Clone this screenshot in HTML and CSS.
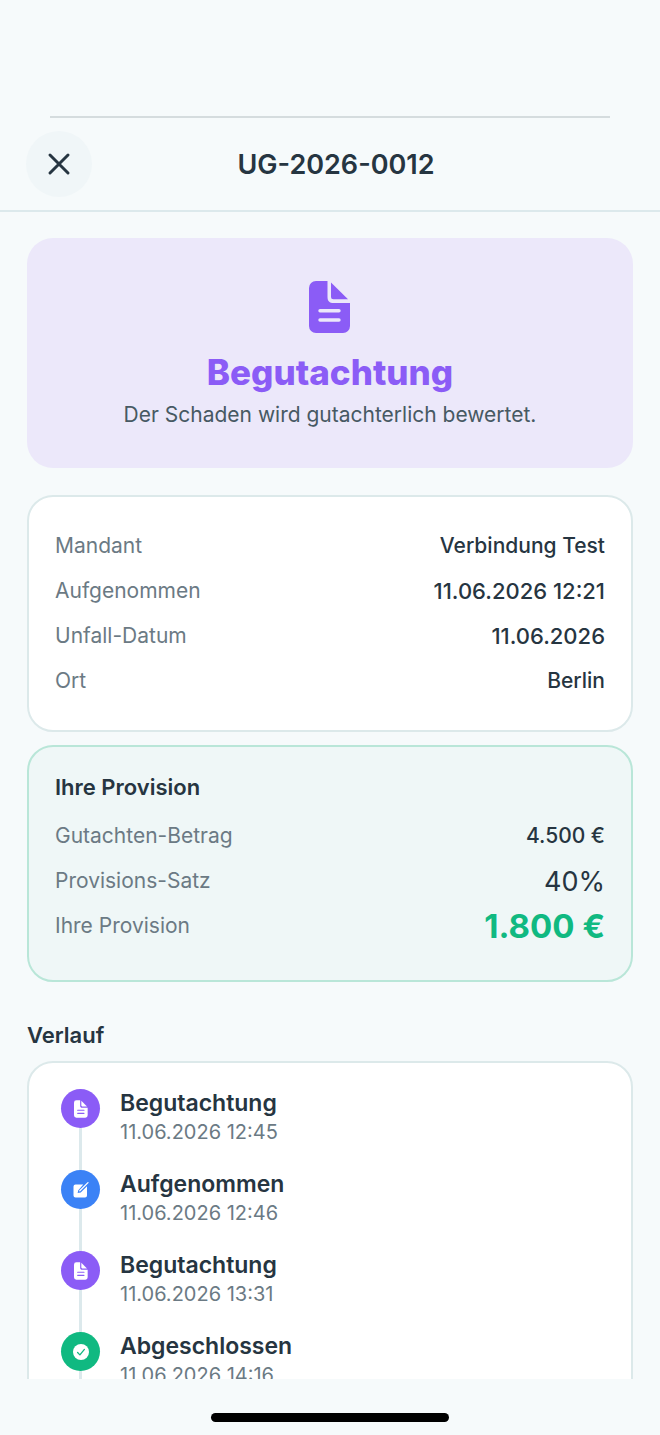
FILE: index.html
```html
<!DOCTYPE html>
<html lang="de">
<head>
    <meta charset="UTF-8">
    <meta name="viewport" content="width=device-width, initial-scale=1.0">
    <title>UG-2026-0012</title>
    <link rel="stylesheet" href="styles.css">
</head>
<body>

    <svg class="sprite" aria-hidden="true">
        <symbol id="icon-document" viewBox="0 0 42 52">
            <path fill="currentColor" fill-rule="evenodd" d="M7 0H18.500V16C18.500 20 20.500 22 24.500 22H41V45A7 7 0 0 1 34 52H7A7 7 0 0 1 0 45V7A7 7 0 0 1 7 0ZM11 28A1.700 1.700 0 0 0 11 31.400H30A1.700 1.700 0 0 0 30 28ZM11 37.300A1.700 1.700 0 0 0 11 40.700H30A1.700 1.700 0 0 0 30 37.300Z"/>
            <path fill="currentColor" d="M22 1.500L39 18.300H24.500Q22 18.300 22 15.800Z"/>
        </symbol>
        <symbol id="icon-edit" viewBox="0 0 18 18">
            <path fill="currentColor" d="M3.500 3.500H11.300L6.300 9.200L5.600 12L8.700 11.400L15 5.200V14.500A2 2 0 0 1 13 16.500H3.500A2 2 0 0 1 1.500 14.500V5.500A2 2 0 0 1 3.500 3.500Z"/>
            <path fill="none" stroke="currentColor" stroke-width="1.300" stroke-linecap="round" d="M7.800 9.800L16 1.600"/>
        </symbol>
        <symbol id="icon-check" viewBox="0 0 18 18">
            <circle cx="9" cy="9" r="8" fill="currentColor"/>
            <path class="check-mark" d="M5.600 9.500L7.900 11.900L12.400 6.400"/>
        </symbol>
    </svg>

    <div class="screen">
        <div class="status-area"></div>

        <header class="header">
            <button class="close-btn" type="button" aria-label="Schließen">
                <svg width="24" height="24" viewBox="0 0 24 24"><path d="M3 3L21 21M21 3L3 21"/></svg>
            </button>
            <h1 class="header-title">UG-2026-0012</h1>
        </header>

        <main class="content">
            <section class="hero">
                <svg class="hero-icon" width="42" height="52"><use href="#icon-document"/></svg>
                <h2 class="hero-title">Begutachtung</h2>
                <p class="hero-text">Der Schaden wird gutachterlich bewertet.</p>
            </section>

            <dl class="card card-info">
                <div class="row"><dt>Mandant</dt><dd>Verbindung Test</dd></div>
                <div class="row"><dt>Aufgenommen</dt><dd class="date">11.06.2026 12:21</dd></div>
                <div class="row"><dt>Unfall-Datum</dt><dd class="date">11.06.2026</dd></div>
                <div class="row"><dt>Ort</dt><dd>Berlin</dd></div>
            </dl>

            <section class="card card-provision">
                <h3 class="card-title">Ihre Provision</h3>
                <dl class="rows">
                    <div class="row"><dt>Gutachten-Betrag</dt><dd>4.500 €</dd></div>
                    <div class="row"><dt>Provisions-Satz</dt><dd class="rate">40%</dd></div>
                    <div class="row"><dt>Ihre Provision</dt><dd class="total">1.800 €</dd></div>
                </dl>
            </section>

            <h3 class="section-title">Verlauf</h3>
            <ol class="card timeline">
                <li class="step">
                    <span class="dot purple"><svg width="14" height="18"><use href="#icon-document"/></svg></span>
                    <div class="step-body">
                        <h4>Begutachtung</h4>
                        <time>11.06.2026 12:45</time>
                    </div>
                </li>
                <li class="step">
                    <span class="dot blue"><svg width="18" height="18"><use href="#icon-edit"/></svg></span>
                    <div class="step-body">
                        <h4>Aufgenommen</h4>
                        <time>11.06.2026 12:46</time>
                    </div>
                </li>
                <li class="step">
                    <span class="dot purple"><svg width="14" height="18"><use href="#icon-document"/></svg></span>
                    <div class="step-body">
                        <h4>Begutachtung</h4>
                        <time>11.06.2026 13:31</time>
                    </div>
                </li>
                <li class="step">
                    <span class="dot green"><svg width="18" height="18"><use href="#icon-check"/></svg></span>
                    <div class="step-body">
                        <h4>Abgeschlossen</h4>
                        <time>11.06.2026 14:16</time>
                    </div>
                </li>
            </ol>
        </main>

        <footer class="home-area">
            <div class="home-bar"></div>
        </footer>
    </div>

</body>
</html>
```
FILE: styles.css
```css
* {
    box-sizing: border-box;
    margin: 0;
    padding: 0;
}
body {
    font-family: Inter, "Liberation Sans", sans-serif;
    font-size: 21px;
    line-height: 28px;
    background: #f6fafb;
    color: #263541;
}
.sprite {
    position: absolute;
    width: 0;
    height: 0;
}
.screen {
    display: flex;
    flex-direction: column;
    height: 100vh;
}
.status-area {
    height: 118px;
    margin: 0 50px;
    border-bottom: 2px solid #d5dcde;
    flex-shrink: 0;
}

/* Header */
.header {
    display: flex;
    align-items: center;
    padding: 13px 80px 13px 26px;
    border-bottom: 2px solid #dce9ec;
    flex-shrink: 0;
}
.close-btn {
    display: flex;
    align-items: center;
    justify-content: center;
    width: 66px;
    height: 66px;
    border: none;
    border-radius: 50%;
    background: #f0f6f8;
    cursor: pointer;
}
.close-btn path {
    fill: none;
    stroke: #263541;
    stroke-width: 3;
    stroke-linecap: round;
}
.header-title {
    flex: 1;
    padding-top: 2px;
    text-align: center;
    font-size: 27px;
    font-weight: 600;
}

/* Scrolling content */
.content {
    flex: 1;
    min-height: 0;
    overflow: hidden;
    padding: 26px 27px 0;
}
.hero {
    display: flex;
    flex-direction: column;
    align-items: center;
    padding: 43px 26px 39px;
    margin-bottom: 27px;
    border-radius: 26px;
    background: #ece8fa;
    text-align: center;
}
.hero-icon {
    color: #8b5cf6;
}
.hero-title {
    margin: 16px 0 6px;
    font-size: 35px;
    line-height: 46px;
    font-weight: 800;
    color: #8b5cf6;
}
.hero-text {
    color: #475963;
}
.card {
    padding: 26px;
    margin-bottom: 13px;
    border: 2px solid #dce9ea;
    border-radius: 26px;
    background: #fff;
}
.card-info {
    padding-bottom: 27px;
}
.card-provision {
    padding-bottom: 32px;
    border-color: #b9e6d8;
    background: #eff7f7;
}
.card-title {
    margin-bottom: 12px;
    font-size: 22px;
    font-weight: 600;
}
.row {
    display: flex;
    align-items: center;
    justify-content: space-between;
    height: 45px;
}
.row dt {
    color: #6b7a84;
}
.row dd {
    font-weight: 500;
}
.row .date {
    font-size: 22px;
}
.row .rate {
    padding-top: 2px;
    font-size: 27px;
    font-weight: 400;
}
.row .total {
    font-size: 33px;
    font-weight: 700;
    color: #10b981;
}
.section-title {
    margin: 39px 0 12px;
    font-size: 22px;
    font-weight: 600;
}

/* Timeline */
.timeline {
    padding: 26px 32px;
    list-style: none;
}
.step {
    display: flex;
    gap: 20px;
    height: 81px;
    background: linear-gradient(#dce9ec, #dce9ec) 18px 0 / 3px 100% no-repeat;
}
.dot {
    display: flex;
    align-items: center;
    justify-content: center;
    width: 39px;
    height: 39px;
    border-radius: 50%;
    color: #fff;
}
.purple {
    background: #8b5cf6;
}
.blue {
    background: #3b82f6;
}
.green {
    background: #10b981;
}
.check-mark {
    fill: none;
    stroke: #10b981;
    stroke-width: 1.3;
    stroke-linecap: round;
    stroke-linejoin: round;
}
.step-body h4 {
    font-size: 23px;
    line-height: 28px;
    font-weight: 600;
}
.step-body time {
    display: block;
    margin-top: 1px;
    font-size: 20px;
    color: #6b7a84;
}

.home-area {
    display: flex;
    justify-content: center;
    align-items: flex-end;
    height: 56px;
    padding-bottom: 13px;
    flex-shrink: 0;
}
.home-bar {
    width: 36%;
    height: 9px;
    border-radius: 5px;
    background: #000;
}
```
